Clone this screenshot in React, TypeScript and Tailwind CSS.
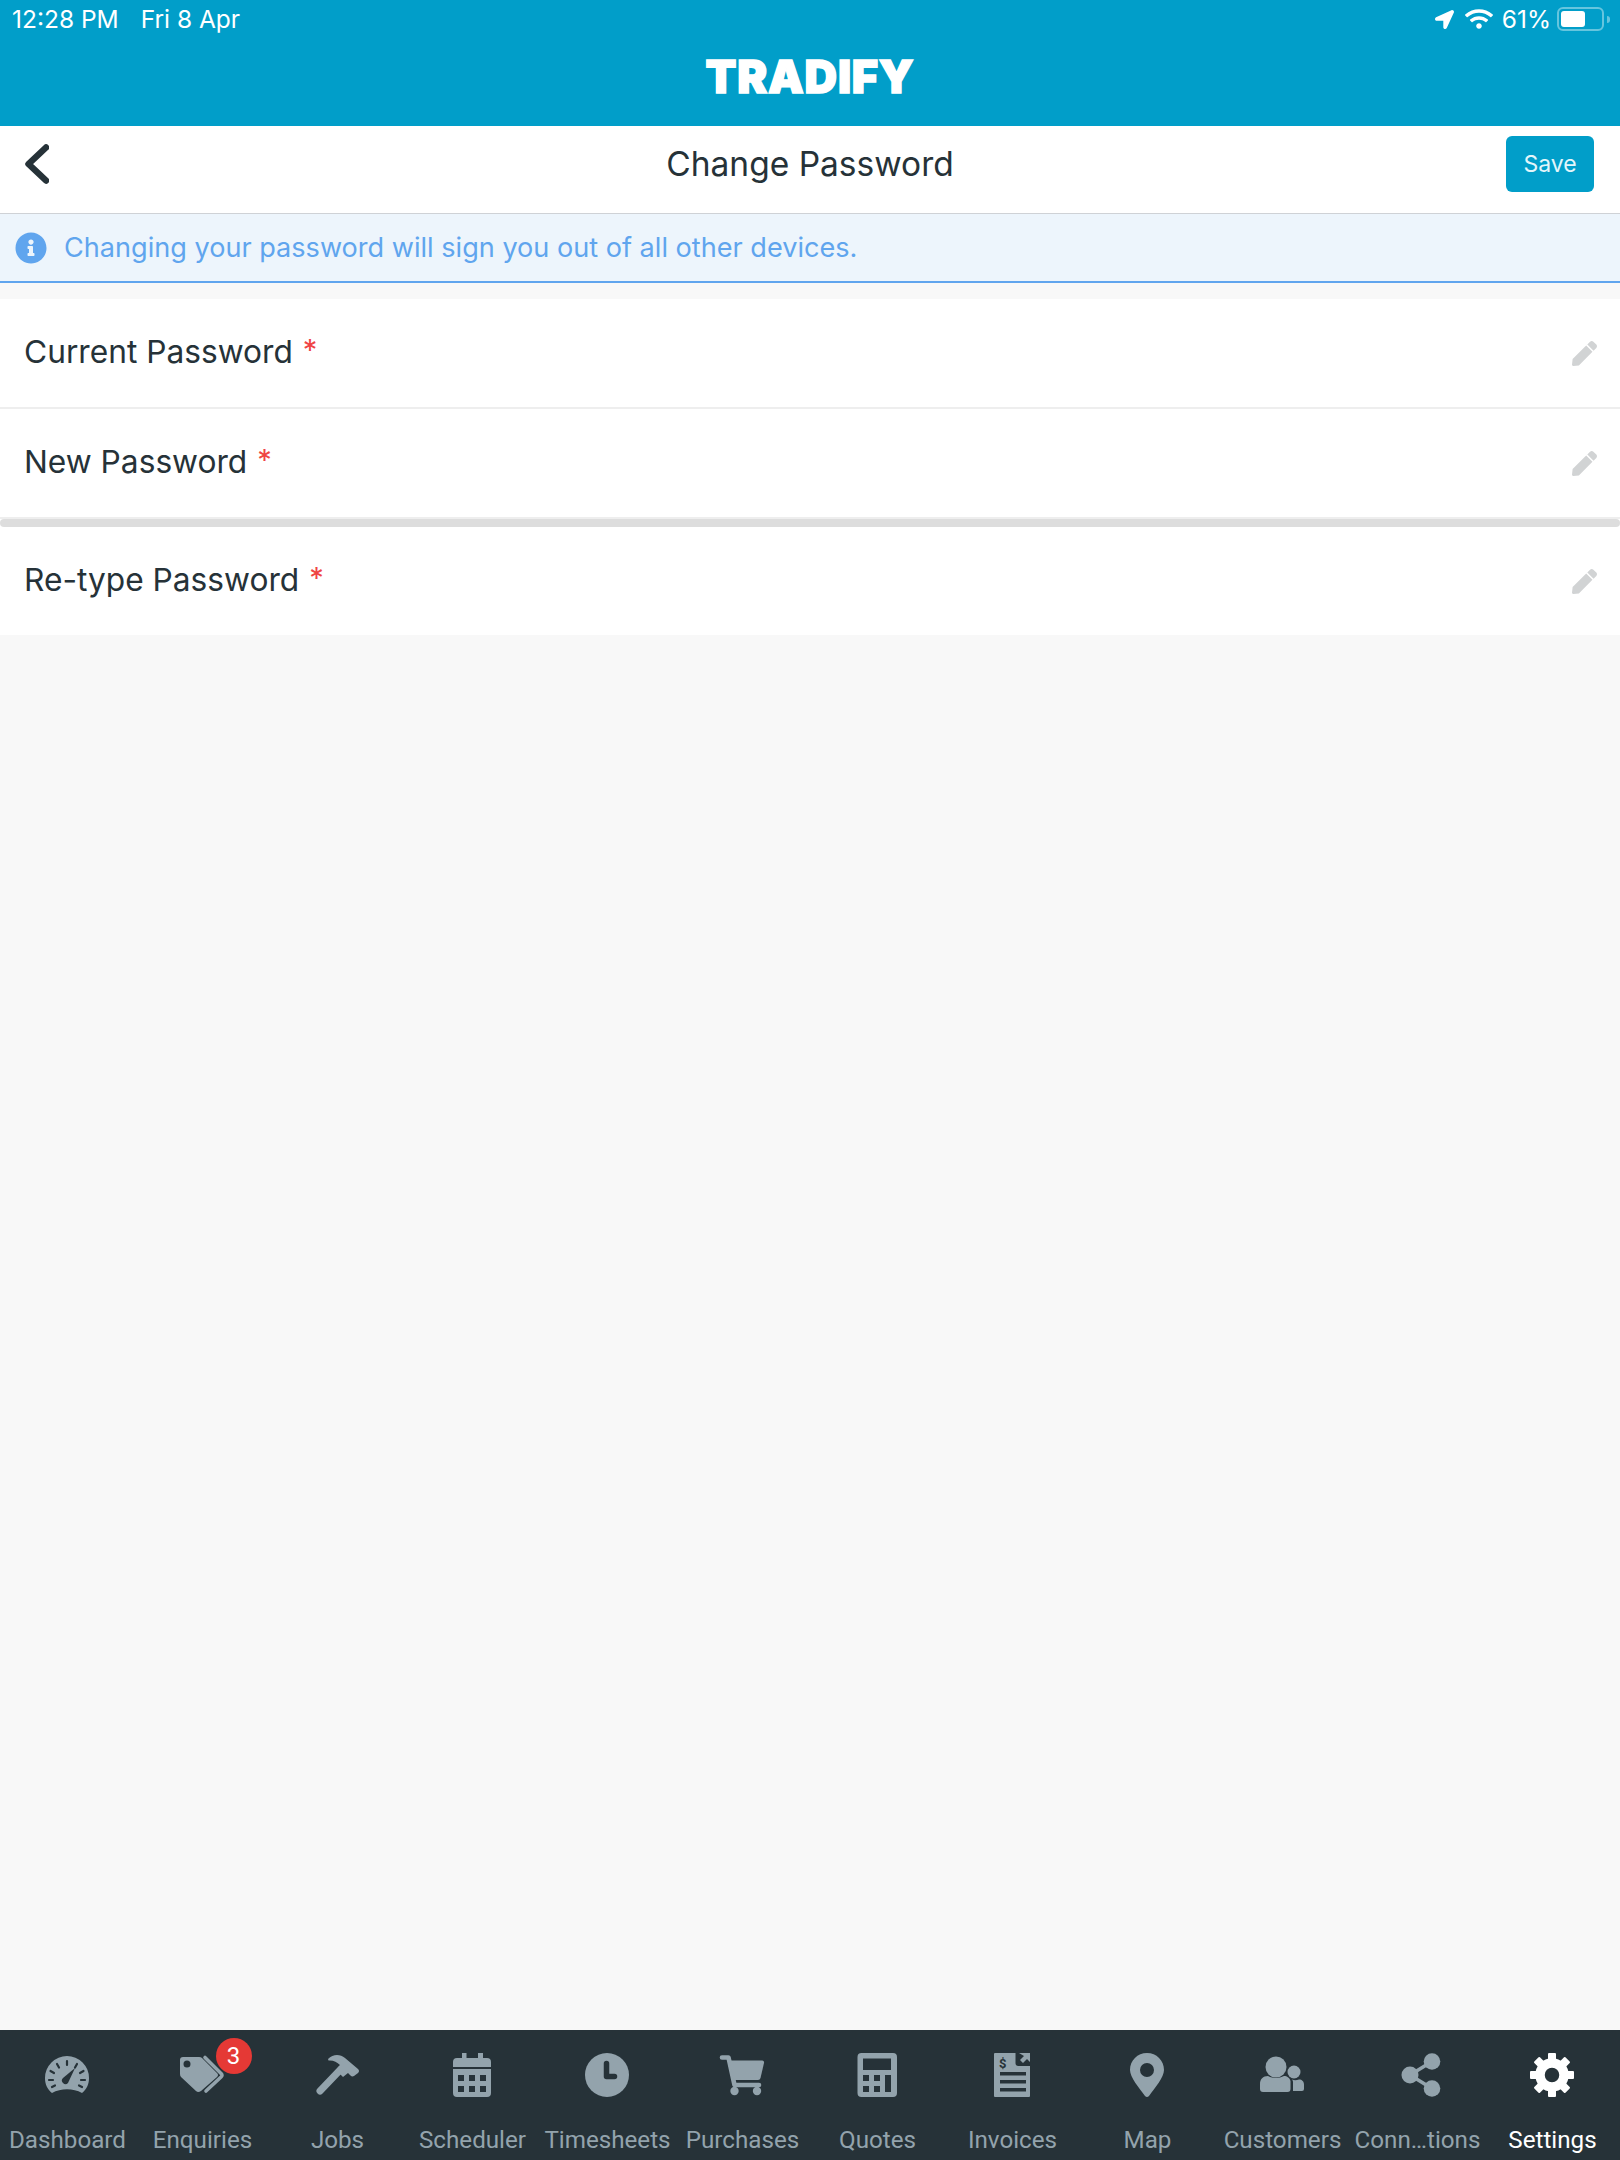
import { FaInfoCircle, FaLocationArrow, FaPen, FaWifi } from "react-icons/fa";

const INK = "#263238";

function DashboardIcon() {
  return (
    <svg viewBox="0 0 44 44" className="h-11 w-11 overflow-visible">
      <path d="M7 40 C2 36 0 31 0 25 A22 22 0 0 1 44 25 C44 31 42 36 37 40 C28 35 16 35 7 40 Z" fill="currentColor" />
      <g stroke={INK} strokeWidth="2.2" strokeLinecap="round">
        <path d="M22 8V12M12 11L14 14.5M32 11L30 14.5M5.5 18L9 20M38.5 18L35 20M4 27H8M36 27H40M7 34L10 32.5M37 34L34 32.5" />
      </g>
      <path d="M18 25L30 15L23 30A3.4 3.4 0 0 1 18 25Z" fill={INK} />
    </svg>
  );
}

function TagsIcon() {
  return (
    <svg viewBox="0 0 44 44" className="h-11 w-11 overflow-visible">
      <path
        fillRule="evenodd"
        d="M3 4H19Q21 4 22 5L37 20Q39 22 37 24L21 38Q18 40 16 38L1 24Q0 23 0 21V7Q0 4 3 4ZM7 7.5A3.5 3.5 0 1 0 7 14.5A3.5 3.5 0 1 0 7 7.5Z"
        fill="currentColor"
      />
      <path d="M25 4.5L41 20.5Q43 22 41 24L26 38" fill="none" stroke="currentColor" strokeWidth="3.6" strokeLinecap="round" />
    </svg>
  );
}

function HammerIcon() {
  return (
    <svg viewBox="0 0 44 44" className="h-11 w-11 overflow-visible">
      <path d="M5 38L26 16" stroke="currentColor" strokeWidth="7" strokeLinecap="round" />
      <path
        d="M13 6C18 1 25 1 30 5L43 16Q45 18 43 20L39 23Q37 24 35.5 22.5L33 20L28 24L21 17L25 12C22 9 18 7 13.5 7.5Z"
        fill="currentColor"
      />
    </svg>
  );
}

function CalendarIcon() {
  return (
    <svg viewBox="0 0 44 44" className="h-11 w-11 overflow-visible">
      <path
        fillRule="evenodd"
        d="M3 16H41V40Q41 44 37 44H7Q3 44 3 40ZM8 22V28H14V22ZM19 22V28H25V22ZM30 22V28H36V22ZM8 33V39H14V33ZM19 33V39H25V33ZM30 33V39H36V33Z"
        fill="currentColor"
      />
      <path d="M3 14V9Q3 5 7 5H12V0H16.5V5H28V0H33V5H37Q41 5 41 9V14Z" fill="currentColor" />
    </svg>
  );
}

function ClockIcon() {
  return (
    <svg viewBox="0 0 44 44" className="h-11 w-11 overflow-visible">
      <circle cx="22" cy="22" r="22" fill="currentColor" />
      <path d="M21.5 10.5V23.5H29.5" fill="none" stroke={INK} strokeWidth="5.5" strokeLinejoin="round" strokeLinecap="round" />
    </svg>
  );
}

function CartIcon() {
  return (
    <svg viewBox="0 0 44 44" className="h-11 w-11 overflow-visible">
      <path d="M2 4.5H8.5L14.5 32H39" fill="none" stroke="currentColor" strokeWidth="4.6" strokeLinecap="round" strokeLinejoin="round" />
      <path d="M9.5 7.5H42Q44.5 7.5 44 10L40.5 25Q40 27 38 27H14Z" fill="currentColor" />
      <circle cx="14.5" cy="38" r="4.2" fill="currentColor" />
      <circle cx="37" cy="38" r="4.2" fill="currentColor" />
    </svg>
  );
}

function CalculatorIcon() {
  return (
    <svg viewBox="0 0 44 44" className="h-11 w-11 overflow-visible">
      <path
        fillRule="evenodd"
        d="M6.5 0H38Q42 0 42 4V40Q42 44 38 44H6.5Q2.5 44 2.5 40V4Q2.5 0 6.5 0ZM8 5.5V17H36V5.5ZM8 22V28H14V22ZM19 22V28H25V22ZM30 22V39H36V22ZM8 33V39H14V33ZM19 33V39H25V33Z"
        fill="currentColor"
      />
    </svg>
  );
}

function InvoiceIcon() {
  return (
    <svg viewBox="0 0 44 44" className="h-11 w-11 overflow-visible">
      <path
        fillRule="evenodd"
        d="M4 1Q4 0 5 0H25.5V10Q25.5 13 28.5 13H40V43Q40 44 39 44H5Q4 44 4 43ZM10 19V22.5H36V19ZM10 27V30.5H36V27ZM10 35V38.5H36V35Z"
        fill="currentColor"
      />
      <path d="M29 0H40V9L37 6L33 10L30 7L34 3Z" fill="currentColor" />
      <text x="9" y="14.5" fontFamily="Roboto, sans-serif" fontSize="13" fontWeight="700" fill={INK}>
        $
      </text>
    </svg>
  );
}

function PinIcon() {
  return (
    <svg viewBox="0 0 44 44" className="h-11 w-11 overflow-visible">
      <path
        fillRule="evenodd"
        d="M22 0C31.5 0 39 7.5 39 17C39 24 30 35 24 43Q22 45 20 43C14 35 5 24 5 17C5 7.5 12.5 0 22 0ZM22 10A7 7 0 1 0 22 24A7 7 0 1 0 22 10Z"
        fill="currentColor"
      />
    </svg>
  );
}

function CustomersIcon() {
  return (
    <svg viewBox="0 0 44 44" className="h-11 w-11 overflow-visible">
      <circle cx="16" cy="14" r="10.5" fill="currentColor" />
      <path d="M0 31C0 26 3 23 8 23Q16 27 24 23C27 23 30 25 30.5 28V36Q30.5 39 27.5 39H3Q0 39 0 36Z" fill="currentColor" />
      <circle cx="34" cy="19" r="6.5" fill="currentColor" />
      <path d="M32 26.5Q35 28 39 26.5C42 26.5 44 28.5 44 31.5V36Q44 38 42 38H33V29Q33 27.5 32 26.5Z" fill="currentColor" />
    </svg>
  );
}

function ShareIcon() {
  return (
    <svg viewBox="0 0 44 44" className="h-11 w-11 overflow-visible">
      <circle cx="15" cy="22" r="8.5" fill="currentColor" />
      <circle cx="37" cy="8.5" r="8.3" fill="currentColor" />
      <circle cx="37" cy="35.5" r="8.3" fill="currentColor" />
      <path d="M15 22L37 8.5M15 22L37 35.5" stroke="currentColor" strokeWidth="3.6" />
    </svg>
  );
}

function CogIcon() {
  return (
    <svg viewBox="0 0 44 44" className="h-11 w-11 overflow-visible">
      <circle cx="22" cy="22" r="12" fill="none" stroke="currentColor" strokeWidth="9.5" />
      {[0, 45, 90, 135, 180, 225, 270, 315].map((a) => (
        <rect key={a} x="18" y="0" width="8" height="9" rx="1" fill="currentColor" transform={`rotate(${a} 22 22)`} />
      ))}
    </svg>
  );
}

const TABS = [
  { label: "Dashboard", icon: <DashboardIcon /> },
  { label: "Enquiries", icon: <TagsIcon />, badge: "3" },
  { label: "Jobs", icon: <HammerIcon /> },
  { label: "Scheduler", icon: <CalendarIcon /> },
  { label: "Timesheets", icon: <ClockIcon /> },
  { label: "Purchases", icon: <CartIcon /> },
  { label: "Quotes", icon: <CalculatorIcon /> },
  { label: "Invoices", icon: <InvoiceIcon /> },
  { label: "Map", icon: <PinIcon /> },
  { label: "Customers", icon: <CustomersIcon /> },
  { label: "Conn…tions", icon: <ShareIcon /> },
  { label: "Settings", icon: <CogIcon />, active: true },
];

function FieldRow({ label }: { label: string }) {
  return (
    <div className="flex h-[108px] items-center justify-between bg-white pl-[24px] pr-[23px]">
      <div className="flex -translate-y-[1px] items-start text-[31.7px] leading-[40px] text-[#263238]">
        {label}
        <span className="ml-[10px] mt-[3px] text-[29px] leading-[30px] text-[#ef4444]">*</span>
      </div>
      <FaPen className="h-[25px] w-[25px] text-[#d1d3d4]" />
    </div>
  );
}

export default function App() {
  return (
    <div className="flex h-[2160px] w-full flex-col bg-[#f8f8f8] font-['Inter',sans-serif]">
      <header className="h-[126px] bg-[#019ec9] text-white">
        <div className="flex h-[38px] items-center justify-between pl-3 pr-[10px] text-[24.5px] leading-none">
          <div className="flex gap-[22px]">
            <span>12:28 PM</span>
            <span>Fri 8 Apr</span>
          </div>
          <div className="flex items-center">
            <FaLocationArrow className="h-[19px] w-[19px]" />
            <FaWifi className="ml-[11px] h-[24px] w-[28px]" />
            <span className="ml-[9px]">61%</span>
            <div className="ml-[6px] flex h-[24px] w-[47px] items-center rounded-[6px] border-2 border-white/40 p-[2px]">
              <div className="h-[16px] w-[24px] rounded-[3px] bg-white" />
            </div>
            <div className="ml-[3px] h-[7px] w-[3px] rounded-r-full bg-white/40" />
          </div>
        </div>
        <div className="mt-[21px] text-center text-[45px] font-black leading-[36px] tracking-[0.8px] [-webkit-text-stroke:1.5px_white]">
          TRADIFY
        </div>
      </header>

      <div className="grid h-[88px] grid-cols-[1fr_auto_1fr] items-center border-b border-[#cfd2d6] bg-white pb-[11px]">
        <svg viewBox="0 0 24 40" className="ml-[25px] h-10 w-6 text-[#263238]">
          <path d="M21 3.5L3.5 20L21 36.5" fill="none" stroke="currentColor" strokeWidth="6.5" strokeLinecap="round" strokeLinejoin="round" />
        </svg>
        <h1 className="text-[33.5px] font-normal text-[#263238]">Change Password</h1>
        <div className="flex justify-end pr-[26px]">
          <button className="h-[56px] w-[88px] rounded-[6px] bg-[#019ec9] text-[23px] text-[#e3f6fb]">Save</button>
        </div>
      </div>

      <div className="flex h-[69px] items-center gap-[17px] border-b-2 border-[#60a5ee] bg-[#edf5fc] pl-[15px] text-[#60a5ee]">
        <FaInfoCircle className="h-[32px] w-[32px]" />
        <span className="translate-y-[1px] text-[27.1px]">Changing your password will sign you out of all other devices.</span>
      </div>

      <main className="mt-4 flex-1">
        <FieldRow label="Current Password" />
        <div className="h-[2px] bg-[#eeeeee]" />
        <FieldRow label="New Password" />
        <div className="border-t-2 border-[#eeeeee] bg-white">
          <div className="h-[8px] rounded-full bg-[#dddddd]" />
        </div>
        <FieldRow label="Re-type Password" />
      </main>

      <nav className="grid h-[130px] grid-cols-12 bg-[#263238] pt-[23px] font-['Roboto',sans-serif]">
        {TABS.map((tab) => (
          <div
            key={tab.label}
            className={`flex flex-col items-center ${tab.active ? "text-white" : "text-[#93a3ac]"}`}
          >
            <div className="relative h-11 w-11 -translate-x-[1px]">
              {tab.icon}
              {tab.badge && (
                <span className="absolute left-[36px] top-[-15px] flex h-9 w-9 items-center justify-center rounded-full bg-[#e53935] text-[24px] text-white">
                  {tab.badge}
                </span>
              )}
            </div>
            <span className="mt-[29px] whitespace-nowrap text-[24.2px] leading-[28px]">{tab.label}</span>
          </div>
        ))}
      </nav>
    </div>
  );
}
